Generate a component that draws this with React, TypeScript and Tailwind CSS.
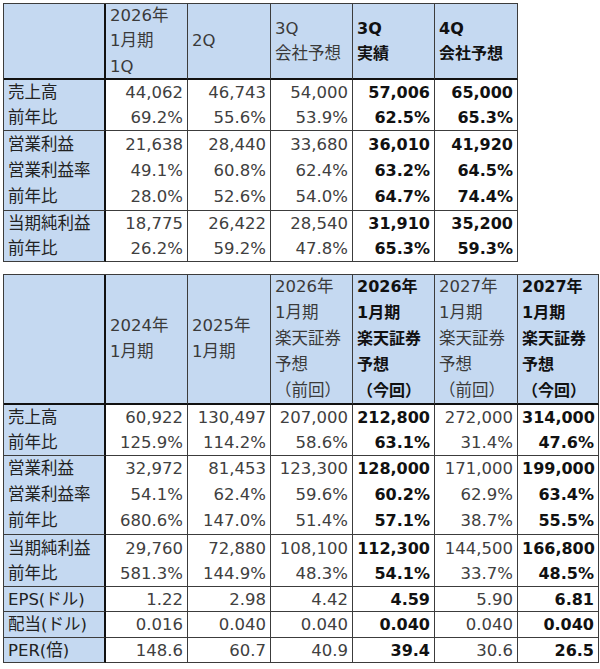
import React from "react";

type Row = string[];
type Head = { lines: string[]; bold?: boolean };

const t1Head: Head[] = [
  { lines: ["2026年", "1月期", "1Q"] },
  { lines: ["2Q"] },
  { lines: ["3Q", "会社予想"] },
  { lines: ["3Q", "実績"], bold: true },
  { lines: ["4Q", "会社予想"], bold: true },
];

const t1Groups: Row[][] = [
  [
    ["売上高", "44,062", "46,743", "54,000", "57,006", "65,000"],
    ["前年比", "69.2%", "55.6%", "53.9%", "62.5%", "65.3%"],
  ],
  [
    ["営業利益", "21,638", "28,440", "33,680", "36,010", "41,920"],
    ["営業利益率", "49.1%", "60.8%", "62.4%", "63.2%", "64.5%"],
    ["前年比", "28.0%", "52.6%", "54.0%", "64.7%", "74.4%"],
  ],
  [
    ["当期純利益", "18,775", "26,422", "28,540", "31,910", "35,200"],
    ["前年比", "26.2%", "59.2%", "47.8%", "65.3%", "59.3%"],
  ],
];

const t2Head: Head[] = [
  { lines: ["2024年", "1月期"] },
  { lines: ["2025年", "1月期"] },
  { lines: ["2026年", "1月期", "楽天証券", "予想", "（前回）"] },
  { lines: ["2026年", "1月期", "楽天証券", "予想", "（今回）"], bold: true },
  { lines: ["2027年", "1月期", "楽天証券", "予想", "（前回）"] },
  { lines: ["2027年", "1月期", "楽天証券", "予想", "（今回）"], bold: true },
];

const t2Groups: Row[][] = [
  [
    ["売上高", "60,922", "130,497", "207,000", "212,800", "272,000", "314,000"],
    ["前年比", "125.9%", "114.2%", "58.6%", "63.1%", "31.4%", "47.6%"],
  ],
  [
    ["営業利益", "32,972", "81,453", "123,300", "128,000", "171,000", "199,000"],
    ["営業利益率", "54.1%", "62.4%", "59.6%", "60.2%", "62.9%", "63.4%"],
    ["前年比", "680.6%", "147.0%", "51.4%", "57.1%", "38.7%", "55.5%"],
  ],
  [
    ["当期純利益", "29,760", "72,880", "108,100", "112,300", "144,500", "166,800"],
    ["前年比", "581.3%", "144.9%", "48.3%", "54.1%", "33.7%", "48.5%"],
  ],
  [["EPS(ドル)", "1.22", "2.98", "4.42", "4.59", "5.90", "6.81"]],
  [["配当(ドル)", "0.016", "0.040", "0.040", "0.040", "0.040", "0.040"]],
  [["PER(倍)", "148.6", "60.7", "40.9", "39.4", "30.6", "26.5"]],
];

function DataTable({
  cols,
  head,
  headLine,
  headH,
  groups,
  groupH,
  boldCols,
}: {
  cols: string;
  head: Head[];
  headLine: string;
  headH: string;
  groups: Row[][];
  groupH: string[];
  boldCols: number[];
}) {
  return (
    <div className={`grid ${cols} border-l border-t border-[#3c3c3c]`}>
      {/* header */}
      <div className={`${headH} bg-[#c5d9f1] border-r-2 border-r-[#111] border-b-2 border-b-[#111]`} />
      {head.map((h, i) => (
        <div
          key={`h${i}`}
          className={`${headH} bg-[#c5d9f1] border-r border-r-[#3c3c3c] border-b-2 border-b-[#111] px-[4px] flex flex-col justify-center whitespace-nowrap overflow-visible ${headLine} ${
            h.bold ? "font-bold text-[16px] text-[#111]" : "text-[#3a3a3a]"
          }`}
        >
          {h.lines.map((l, j) => (
            <div key={j}>{l}</div>
          ))}
        </div>
      ))}
      {groups.map((g, gi) => {
        const ncol = g[0].length;
        const h = groupH[gi];
        const lead = g.length === 3 ? "leading-[26px]" : "leading-[25px]";
        return Array.from({ length: ncol }).map((_, ci) => {
          const lines = g.map((r) => r[ci]);
          if (ci === 0) {
            return (
              <div
                key={`${gi}-${ci}`}
                className={`${h} ${lead} bg-[#c5d9f1] border-r-2 border-r-[#111] border-b border-b-[#3c3c3c] px-[4px] flex flex-col justify-center whitespace-nowrap text-left text-[#222]`}
              >
                {lines.map((l, j) => (
                  <div key={j}>{l}</div>
                ))}
              </div>
            );
          }
          const bold = boldCols.includes(ci);
          return (
            <div
              key={`${gi}-${ci}`}
              className={`${h} ${lead} bg-white border-r border-r-[#3c3c3c] border-b border-b-[#3c3c3c] px-[4px] flex flex-col justify-center whitespace-nowrap text-right ${
                bold ? "font-bold text-[16px] text-[#111]" : "text-[#404040]"
              }`}
            >
              {lines.map((l, j) => (
                <div key={j}>{l}</div>
              ))}
            </div>
          );
        });
      })}
    </div>
  );
}

export default function App() {
  return (
    <div
      className="w-[600px] h-[669px] bg-white pt-[3px] pl-[3px] text-[16.5px] overflow-hidden"
      style={{ fontFamily: '"DejaVu Sans", "Noto Sans CJK JP", sans-serif' }}
    >
      <div className="flex flex-col items-start gap-[12px]">
        <DataTable
          cols="grid-cols-[102px_82px_83px_82px_82px_83px]"
          head={t1Head}
          headLine="leading-[25.5px]"
          headH="h-[76px]"
          groups={t1Groups}
          groupH={["h-[51px]", "h-[80px]", "h-[51px]"]}
          boldCols={[4, 5]}
        />
        <DataTable
          cols="grid-cols-[102px_82px_83px_82px_82px_83px_81px]"
          head={t2Head}
          headLine="leading-[26px]"
          headH="h-[130px]"
          groups={t2Groups}
          groupH={["h-[51px]", "h-[79px]", "h-[52px]", "h-[25px]", "h-[26px]", "h-[25px]"]}
          boldCols={[4, 6]}
        />
      </div>
    </div>
  );
}
